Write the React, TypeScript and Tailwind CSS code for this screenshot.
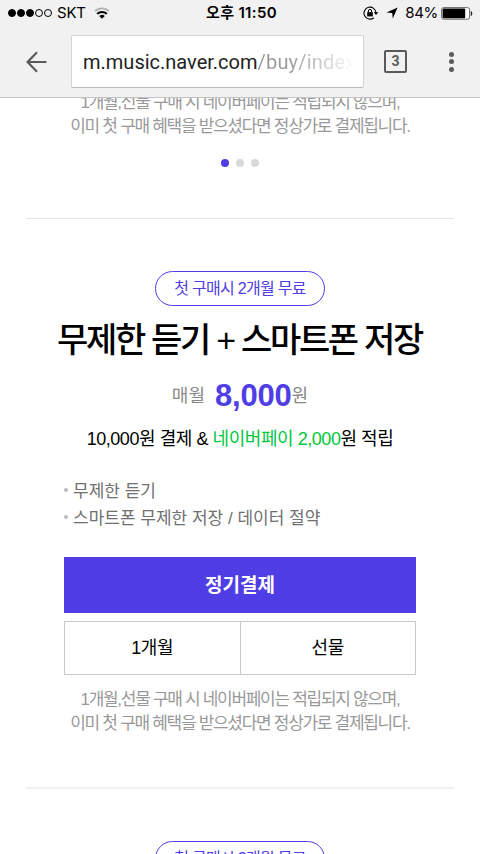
import { ReactNode } from 'react';

const WifiIcon = () => (
    <svg width="16" height="12" viewBox="0 0 16 12" fill="none">
        <path d="M1 4.2A10 10 0 0 1 15 4.2" stroke="#b0b0b0" strokeWidth="1.7" />
        <path d="M3.1 6.9A7 7 0 0 1 12.9 6.9" stroke="#000" strokeWidth="2" />
        <path d="M8 11.8L5.2 9a4 4 0 0 1 5.6 0z" fill="#000" />
    </svg>
);

const RotationLockIcon = () => (
    <svg width="16" height="14" viewBox="0 0 16 14" fill="none" stroke="#000">
        <path d="M10.8 11.8A6 6 0 1 1 13 7" strokeWidth="1.1" />
        <path d="M10.7 6.2h4.6L13 9z" fill="#000" stroke="none" />
        <rect x="4.2" y="6.2" width="5.6" height="4.2" fill="#000" stroke="none" />
        <path d="M5.4 6.4V5a1.6 1.6 0 0 1 3.2 0v1.4" strokeWidth="1" />
    </svg>
);

const LocationIcon = () => (
    <svg width="12" height="12" viewBox="0 0 12 12">
        <path d="M11.6 0.5L6.8 11.5 6.2 6 0.5 5.4z" fill="#000" />
    </svg>
);

const BatteryIcon = () => (
    <svg width="32" height="13" viewBox="0 0 32 13">
        <rect x="0.6" y="0.6" width="28" height="11.6" rx="2" fill="#fff" stroke="#666" strokeWidth="1" />
        <rect x="1.6" y="1.6" width="22.6" height="9.6" rx="1" fill="#000" />
        <path d="M29.8 4c2 .6 2 4.4 0 5z" fill="#222" />
    </svg>
);

const StatusBar = () => (
    <div className="flex h-[26px] items-center pr-[7px] pl-2 font-['Inter',sans-serif] text-black">
        <div className="flex w-[198px] items-center">
            <div className="flex gap-[1px]">
                {[true, true, true, false, false].map((filled, idx) => (
                    <span key={idx} className={`size-2 rounded-full border border-black ${filled ? 'bg-black' : ''}`} />
                ))}
            </div>
            <span className="ml-[5px] text-[15px] tracking-[-0.2px]">SKT</span>
            <span className="ml-2">
                <WifiIcon />
            </span>
        </div>
        <div className="font-['Inter','Noto_Sans_CJK_KR',sans-serif] text-[15px] font-semibold tracking-[0.35px] whitespace-nowrap">오후 11:50</div>
        <div className="ml-auto flex items-center">
            <RotationLockIcon />
            <span className="ml-[7px]">
                <LocationIcon />
            </span>
            <span className="ml-[7px] text-[15px] tracking-[-0.3px]">84%</span>
            <span className="ml-[3px]">
                <BatteryIcon />
            </span>
        </div>
    </div>
);

const AddressBar = () => (
    <div className="flex h-[71px] items-center font-['Roboto',sans-serif]">
        <button type="button" className="ml-[26px] shrink-0">
            <svg width="21" height="22" viewBox="0 0 21 22" fill="none" stroke="#5a5a5a" strokeWidth="2.2">
                <path d="M20.5 11H2M11 1.3L1.6 11 11 20.7" />
            </svg>
        </button>
        <div className="ml-6 flex h-[53px] w-[293px] shrink-0 items-center rounded-[2px] border border-[#d4d4d4] border-b-[#b8b8b8] bg-white pl-[11px] text-[20px] whitespace-nowrap">
            <span className="text-[#222]">m.music.naver.com</span>
            <span className="-mr-2 bg-linear-to-r from-[#999] from-30% to-white bg-clip-text tracking-[0.2px] text-transparent">/buy/index</span>
        </div>
        <button type="button" className="ml-5 flex size-[23px] shrink-0 items-center justify-center rounded-[2px] border-2 border-[#5a5a5a] text-[14px] font-bold text-[#5a5a5a]">
            3
        </button>
        <button type="button" className="ml-[42px] flex flex-col gap-[2.5px]">
            <span className="size-[5px] rounded-full bg-[#5a5a5a]" />
            <span className="size-[5px] rounded-full bg-[#5a5a5a]" />
            <span className="size-[5px] rounded-full bg-[#5a5a5a]" />
        </button>
    </div>
);

const Notice = () => (
    <p className="text-center text-[17px] leading-6 tracking-[-1.3px] whitespace-nowrap text-[#999]">
        1개월,선물 구매 시 네이버페이는 적립되지 않으며,
        <br />
        이미 첫 구매 혜택을 받으셨다면 정상가로 결제됩니다.
    </p>
);

const Badge = ({ children }: { children: ReactNode }) => (
    <div className="mx-auto flex h-[35px] w-[170px] items-center justify-center rounded-full border border-[#4f3de6] pt-px text-[16px] tracking-[-0.7px] whitespace-nowrap text-[#4f3de6]">
        {children}
    </div>
);

const Feature = ({ children }: { children: ReactNode }) => (
    <li className="flex items-center gap-[5px]">
        <span className="-mt-1 size-1 rounded-full bg-[#bbb]" />
        {children}
    </li>
);

const App = () => {
    return (
        <div className="flex h-[854px] w-[480px] flex-col overflow-hidden bg-white font-['Liberation_Sans','Noto_Sans_CJK_KR',sans-serif]">
            <header className="relative z-10 h-[98px] shrink-0 border-b border-[#c4c4c4] bg-[#f1f1f1]">
                <StatusBar />
                <AddressBar />
            </header>
            <main className="min-h-0 flex-1 overflow-hidden px-[26px]">
                <section className="-mt-[7px] h-[128px] border-b border-[#e6e6e6]">
                    <Notice />
                    <div className="mt-5 flex justify-center gap-[7px]">
                        <span className="size-2 rounded-full bg-[#4f3de6]" />
                        <span className="size-2 rounded-full bg-[#d8d8d8]" />
                        <span className="size-2 rounded-full bg-[#d8d8d8]" />
                    </div>
                </section>
                <section className="h-[570px] border-b-2 border-[#f0f0f0] px-[38px] pt-[52px]">
                    <Badge>첫 구매시 2개월 무료</Badge>
                    <h2 className="-mx-8 mt-[10px] pr-px text-center text-[34px] leading-[48px] font-medium tracking-[-2.3px] whitespace-nowrap text-black">무제한 듣기 + 스마트폰 저장</h2>
                    <p className="mt-3 flex h-10 items-center justify-center text-[18px] text-[#8a8a8a]">
                        매월
                        <strong className="ml-[10px] text-[31px] font-bold tracking-[-0.2px] text-[#4f3de6]">8,000</strong>원
                    </p>
                    <p className="mt-[9px] text-center text-[18px] leading-7 tracking-[-0.45px] whitespace-nowrap text-black">
                        10,000원 결제 & <span className="text-[#00c73c]">네이버페이 2,000</span>원 적립
                    </p>
                    <ul className="mt-[25px] text-[17px] leading-[27px] text-[#707070]">
                        <Feature>무제한 듣기</Feature>
                        <Feature>스마트폰 무제한 저장 / 데이터 절약</Feature>
                    </ul>
                    <button type="button" className="mt-[25px] block h-14 w-full bg-[#4f3de6] pt-0.5 text-[19px] font-bold text-white">
                        정기결제
                    </button>
                    <div className="mt-2 flex h-[54px] border border-[#c9c9c9] text-[18px] tracking-[-0.3px] text-black">
                        <button type="button" className="flex-1 border-r border-[#c9c9c9]">
                            1개월
                        </button>
                        <button type="button" className="flex-1">
                            선물
                        </button>
                    </div>
                    <div className="mt-[13px]">
                        <Notice />
                    </div>
                </section>
                <section className="pt-[52px]">
                    <Badge>첫 구매시 2개월 무료</Badge>
                </section>
            </main>
        </div>
    );
};

export default App;
